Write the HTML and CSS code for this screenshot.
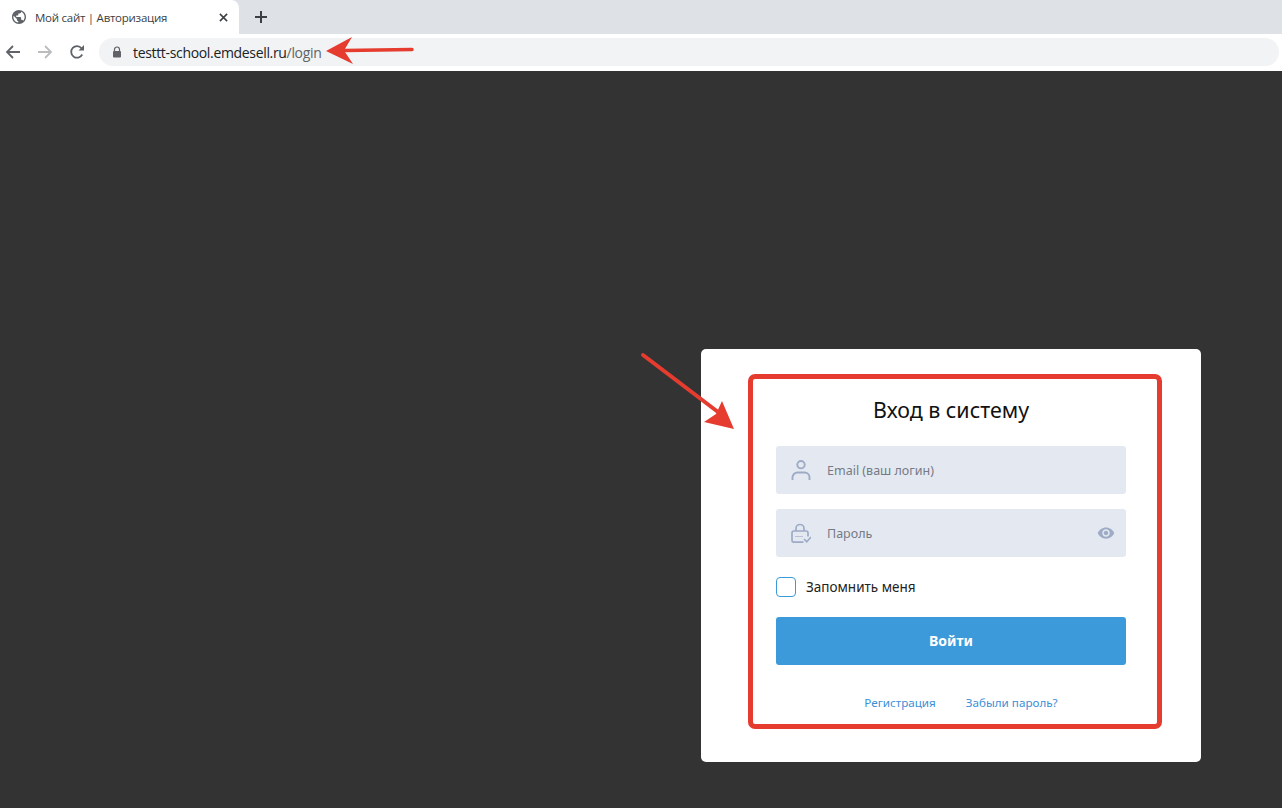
FILE: index.html
```html
<!DOCTYPE html>
<html lang="ru">
<head>
<meta charset="utf-8">
<title>Мой сайт | Авторизация</title>
<link rel="stylesheet" href="styles.css">
</head>
<body>
<header class="browser">
  <div class="tabstrip">
    <div class="tab">
      <svg class="favicon" viewBox="2 2 20 20"><path d="M12 2C6.48 2 2 6.48 2 12s4.48 10 10 10 10-4.48 10-10S17.520 2 12 2zm-1 17.930c-3.950-.49-7-3.850-7-7.930 0-.62.08-1.210.21-1.790L9 15v1c0 1.100.9 2 2 2v1.930zm6.900-2.540c-.26-.81-1-1.390-1.900-1.390h-1v-3c0-.55-.45-1-1-1H8v-2h2c.55 0 1-.45 1-1V7h2c1.100 0 2-.9 2-2v-.41c2.930 1.190 5 4.060 5 7.410 0 2.080-.8 3.970-2.100 5.390z" fill="#5f6368"/></svg>
      <span class="tab-title">Мой сайт | Авторизация</span>
      <svg class="tab-close" viewBox="0 0 10 10"><path d="M1 1l8 8M9 1l-8 8" stroke="#3c4043" stroke-width="1.700" fill="none"/></svg>
    </div>
    <svg class="new-tab" viewBox="0 0 12 12"><path d="M6 0v12M0 6h12" stroke="#3c4043" stroke-width="2" fill="none"/></svg>
  </div>
  <div class="toolbar">
    <svg class="nav-icon" viewBox="0 0 16 16"><path d="M15 8H2.500M8 2L2 8l6 6" stroke="#5f6368" stroke-width="1.800" fill="none"/></svg>
    <svg class="nav-icon" viewBox="0 0 16 16"><path d="M1 8h12.500M8 2l6 6-6 6" stroke="#babcbe" stroke-width="1.800" fill="none"/></svg>
    <svg class="nav-icon" viewBox="0 0 16 16"><path d="M13.200 10.500A5.800 5.800 0 1 1 12.500 4.200" stroke="#5f6368" stroke-width="1.800" fill="none"/><path d="M9.500 6.500H15V1z" fill="#5f6368"/></svg>
    <div class="omnibox">
      <svg class="lock" viewBox="0 0 10 12"><path d="M2.500 5V3.500a2.500 2.500 0 0 1 5 0V5" stroke="#5f6368" stroke-width="1.200" fill="none"/><rect x="1" y="5" width="8" height="6.500" rx="1" fill="#5f6368"/></svg>
      <span class="url">testtt-school.emdesell.ru<span class="url-path">/login</span></span>
    </div>
  </div>
</header>
<main class="stage">
  <section class="card">
    <form class="login">
      <h1 class="login-title">Вход в систему</h1>
      <div class="field">
        <svg class="field-icon" viewBox="0 0 20 20"><circle cx="10" cy="4.700" r="3.700" stroke="#9dabc6" stroke-width="1.900" fill="none"/><path d="M1.500 20v-2.500a5 5 0 0 1 5-5h7a5 5 0 0 1 5 5V20" stroke="#9dabc6" stroke-width="1.900" fill="none"/></svg>
        <span class="placeholder">Email (ваш логин)</span>
      </div>
      <div class="field">
        <svg class="field-icon" viewBox="0 0 20 20"><path d="M5 8V5.500a4 4 0 0 1 8 0V8" stroke="#9dabc6" stroke-width="1.700" fill="none"/><path d="M12.500 19.200H3a2 2 0 0 1-2-2V10a2 2 0 0 1 2-2h12a2 2 0 0 1 2 2v3.500" stroke="#9dabc6" stroke-width="1.700" fill="none"/><path d="M4.500 13.500h7.500" stroke="#8d9ab4" stroke-width="1.200" stroke-dasharray="1 1" fill="none"/><path d="M13 16l2.700 2.700L20 14" stroke="#9dabc6" stroke-width="1.700" fill="none"/></svg>
        <span class="placeholder">Пароль</span>
        <svg class="eye" viewBox="0 0 24 24"><path d="M12 4.500C7 4.500 2.730 7.610 1 12c1.730 4.390 6 7.500 11 7.500s9.270-3.110 11-7.500c-1.730-4.390-6-7.500-11-7.500zM12 17c-2.760 0-5-2.240-5-5s2.240-5 5-5 5 2.240 5 5-2.240 5-5 5zm0-8c-1.660 0-3 1.340-3 3s1.340 3 3 3 3-1.340 3-3-1.340-3-3-3z" fill="#9dabc6"/></svg>
      </div>
      <label class="remember"><span class="checkbox"></span><span>Запомнить меня</span></label>
      <button class="submit" type="button">Войти</button>
      <nav class="links"><a class="link">Регистрация</a><a class="link">Забыли пароль?</a></nav>
    </form>
  </section>
  <div class="highlight"></div>
  <svg class="arrows" viewBox="0 0 1282 808">
    <path d="M412 49.500L345 50.500" stroke="#e63c2f" stroke-width="3.500" stroke-linecap="round" fill="none"/>
    <path d="M326 51L352 37 344 50.500 353 64z" fill="#e63c2f"/>
    <path d="M643 355L718 412" stroke="#e63c2f" stroke-width="4" stroke-linecap="round" fill="none"/>
    <path d="M734 429L722 401 716 414 704 422z" fill="#e63c2f"/>
  </svg>
</main>
</body>
</html>
```
FILE: styles.css
```css
* { box-sizing: border-box; }
html, body { margin: 0; height: 100%; overflow: hidden; }
body { display: flex; flex-direction: column; font-family: "Noto Sans", sans-serif; background: #333; position: relative; }

.browser { flex: none; height: 71px; background: #fff; font-family: "Open Sans", "Noto Sans", sans-serif; }
.tabstrip { height: 34px; background: #dee1e6; display: flex; align-items: center; }
.tab { width: 239px; height: 34px; background: #fff; border-top-right-radius: 8px; display: flex; align-items: center; padding: 0 12px; }
.favicon { width: 14px; height: 14px; flex: none; }
.tab-title { margin-left: 9px; font-size: 11.500px; letter-spacing: -.26px; color: #3c4043; flex: 1; white-space: nowrap; }
.tab-close { width: 9px; height: 9px; flex: none; margin-right: -1px; }
.new-tab { width: 12px; height: 12px; margin-left: 16px; }

.toolbar { height: 36px; display: flex; align-items: center; padding: 0 0 0 5px; }
.nav-icon { width: 16px; height: 16px; flex: none; margin-right: 16px; }
.toolbar .nav-icon:nth-child(3) { margin-right: 14px; }
.omnibox { flex: 1; height: 28px; margin-right: 3px; background: #f1f3f4; border-radius: 14px; display: flex; align-items: center; padding-left: 13px; }
.lock { width: 10px; height: 12px; flex: none; }
.url { margin-left: 11px; font-size: 14px; letter-spacing: -.33px; color: #202124; white-space: nowrap; }
.url-path { color: #5f6368; }

.stage { flex: 1; background: #333; display: flex; justify-content: flex-end; align-items: flex-start; padding: 278px 81px 0 0; }
.card { width: 500px; height: 413px; background: #fff; border-radius: 5px; padding: 0 75px; }
.login { display: flex; flex-direction: column; }
.login-title { margin: 46px 0 21px; height: 30px; line-height: 30px; font-size: 21.400px; font-weight: 400; color: #111; text-align: center; }
.field { height: 48px; background: #e4e9f1; border-radius: 3px; margin-bottom: 15px; display: flex; align-items: center; padding: 0 11px 0 15px; }
.field-icon { width: 20px; height: 20px; flex: none; }
.placeholder { margin-left: 16px; flex: 1; font-size: 12.500px; color: #757a85; }
.eye { width: 18px; height: 18px; flex: none; }
.remember { display: flex; align-items: center; gap: 10px; height: 20px; margin: 5px 0 20px; font-size: 13.500px; color: #222; }
.checkbox { width: 20px; height: 20px; border: 1px solid #3c9ada; border-radius: 4px; background: #fff; flex: none; }
.submit { height: 48px; border: 0; border-radius: 3px; background: #3c9ada; color: #fff; font: 700 14px/46px "Noto Sans", sans-serif; padding: 0 0 1px; }
.links { display: flex; justify-content: center; gap: 30px; margin-top: 29px; padding-left: 20px; }
.link { font-size: 11.650px; line-height: 18px; color: #3c8fd6; }

.highlight { position: absolute; left: 748px; top: 374px; width: 414px; height: 355px; border: 5px solid #e63c2f; border-radius: 7px; pointer-events: none; }
.arrows { position: absolute; left: 0; top: 0; width: 1282px; height: 808px; pointer-events: none; }
```
